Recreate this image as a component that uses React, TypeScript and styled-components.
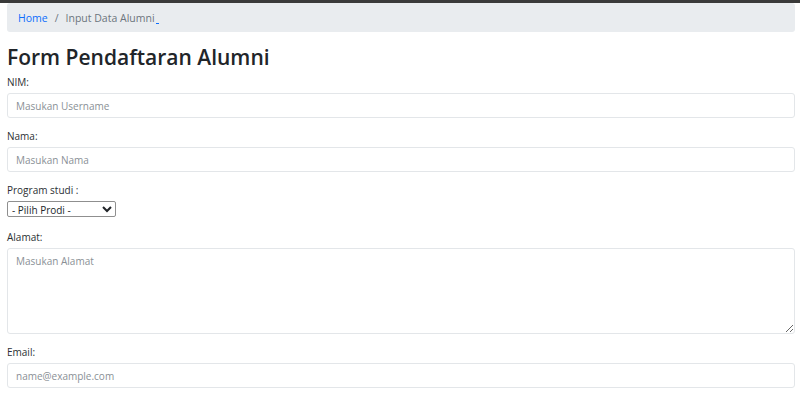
import React from "react";
import styled, { createGlobalStyle } from "styled-components";

const Global = createGlobalStyle`
  html, body { margin: 0; padding: 0; background: #fff; }
  body { font-family: "Open Sans", "Noto Sans", sans-serif; color: #212529; }
  * { box-sizing: border-box; }
`;

const TopLine = styled.div`
  height: 3px;
  background: #3a3a3a;
`;

const Page = styled.div`
  padding: 0 5px 0 7px;
`;

const Breadcrumb = styled.nav`
  background: #e9ecef;
  border-radius: 3px;
  height: 29px;
  display: flex;
  align-items: center;
  padding: 0 11px;
  font-size: 10.5px;
  gap: 7px;
`;

const Crumb = styled.a`
  color: #0d6efd;
  text-decoration: none;
`;

const Sep = styled.span`
  color: #6c757d;
`;

const Active = styled.span`
  color: #6c757d;
`;

const Caret = styled.span`
  display: inline-block;
  width: 3px;
  height: 1px;
  background: #0d6efd;
  vertical-align: -2px;
  margin-left: 1px;
`;

const Title = styled.h2`
  margin: 11px 0 3px;
  font-size: 21px;
  font-weight: 600;
  line-height: 29px;
  color: #212529;
`;

const Field = styled.div<{ $gap?: number }>`
  margin-bottom: ${(p) => p.$gap ?? 11}px;
`;

const Label = styled.label`
  display: block;
  font-size: 10px;
  line-height: 15px;
  margin-bottom: 3px;
  color: #2b2f33;
`;

const Input = styled.input`
  display: block;
  width: 100%;
  height: 25px;
  padding: 0 8px;
  font-family: inherit;
  font-size: 10px;
  border: 1px solid #e3e6e9;
  border-radius: 3px;
  background: #fff;
  &::placeholder { color: #8a9096; }
`;

const TextArea = styled.textarea`
  display: block;
  width: 100%;
  height: 86px;
  padding: 5px 8px;
  font-family: inherit;
  font-size: 10px;
  border: 1px solid #e3e6e9;
  border-radius: 3px;
  resize: vertical;
  &::placeholder { color: #8a9096; }
`;

const Select = styled.select`
  display: block;
  width: 109px;
  height: 16px;
  font-family: inherit;
  font-size: 10px;
  padding: 0;
  color: #212529;
  border: 1px solid #8f8f8f;
  border-radius: 2px;
  background: #fff;
`;

export default function App() {
  return (
    <>
      <Global />
      <TopLine />
      <Page>
        <Breadcrumb>
          <Crumb href="#">Home</Crumb>
          <Sep>/</Sep>
          <Active>
            Input Data Alumni<Caret />
          </Active>
        </Breadcrumb>
        <Title>Form Pendaftaran Alumni</Title>
        <Field>
          <Label>NIM:</Label>
          <Input placeholder="Masukan Username" />
        </Field>
        <Field>
          <Label>Nama:</Label>
          <Input placeholder="Masukan Nama" />
        </Field>
        <Field $gap={13}>
          <Label>Program studi :</Label>
          <Select defaultValue="">
            <option value="">- Pilih Prodi -</option>
          </Select>
        </Field>
        <Field>
          <Label>Alamat:</Label>
          <TextArea placeholder="Masukan Alamat" />
        </Field>
        <Field>
          <Label>Email:</Label>
          <Input placeholder="name@example.com" />
        </Field>
      </Page>
    </>
  );
}
